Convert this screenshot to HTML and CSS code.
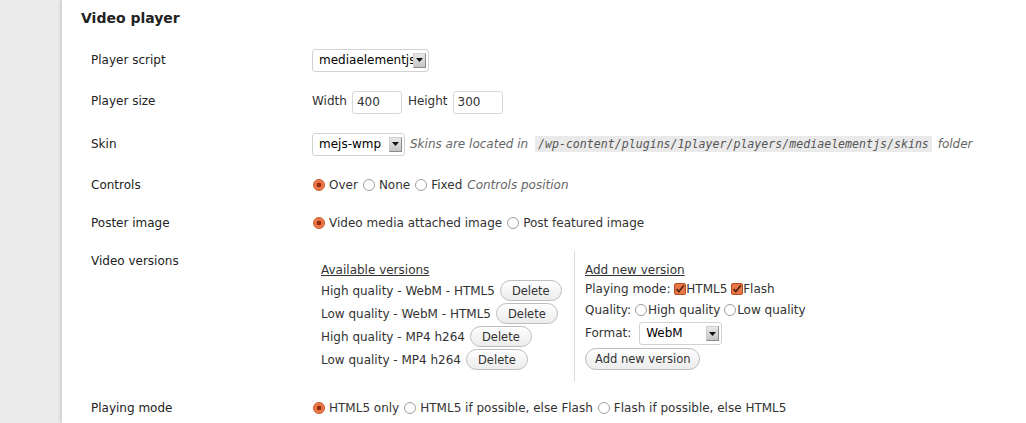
FILE: index.html
```html
<!DOCTYPE html>
<html>
<head>
<meta charset="utf-8">
<link rel="stylesheet" href="styles.css">
</head>
<body>
<div class="page">
  <div class="sidebar"></div>
  <div class="panel">
    <h2 class="title">Video player</h2>
    <div class="form">
      <div class="row r1">
        <div class="label">Player script</div>
        <div class="field">
          <span class="select w117"><span class="sel-text">mediaelementjs</span><span class="arrow"><svg width="7" height="4" viewBox="0 0 7 4"><path d="M0 0h7L3.5 4z" fill="#111"/></svg></span></span>
        </div>
      </div>
      <div class="row r2">
        <div class="label">Player size</div>
        <div class="field">
          <span class="txt">Width</span><span class="input">400</span><span class="txt">Height</span><span class="input">300</span>
        </div>
      </div>
      <div class="row r3">
        <div class="label">Skin</div>
        <div class="field">
          <span class="select w93"><span class="sel-text">mejs-wmp</span><span class="arrow"><svg width="7" height="4" viewBox="0 0 7 4"><path d="M0 0h7L3.5 4z" fill="#111"/></svg></span></span>
          <em class="desc">Skins are located in <code class="code">/wp-content/plugins/1player/players/mediaelementjs/skins</code> folder</em>
        </div>
      </div>
      <div class="row r4">
        <div class="label">Controls</div>
        <div class="field">
          <span class="radio on"></span><span class="opt">Over</span>
          <span class="radio"></span><span class="opt">None</span>
          <span class="radio"></span><span class="opt">Fixed</span>
          <em class="desc tight">Controls position</em>
        </div>
      </div>
      <div class="row r5">
        <div class="label">Poster image</div>
        <div class="field">
          <span class="radio on"></span><span class="opt">Video media attached image</span>
          <span class="radio"></span><span class="opt">Post featured image</span>
        </div>
      </div>
      <div class="row r6">
        <div class="label lbl-top">Video versions</div>
        <div class="field versions">
          <div class="vcol left">
            <div class="vhead">Available versions</div>
            <div class="vitem">High quality - WebM - HTML5<span class="btn">Delete</span></div>
            <div class="vitem">Low quality - WebM - HTML5<span class="btn">Delete</span></div>
            <div class="vitem">High quality - MP4 h264<span class="btn">Delete</span></div>
            <div class="vitem">Low quality - MP4 h264<span class="btn">Delete</span></div>
          </div>
          <div class="vcol right">
            <div class="vhead">Add new version</div>
            <div class="vline">Playing mode: <span class="check"><svg width="10" height="10" viewBox="0 0 10 10"><path d="M1.5 5l2.3 2.6L8.8 1.5" fill="none" stroke="#5a2412" stroke-width="1.8"/></svg></span>HTML5 <span class="check"><svg width="10" height="10" viewBox="0 0 10 10"><path d="M1.5 5l2.3 2.6L8.8 1.5" fill="none" stroke="#5a2412" stroke-width="1.8"/></svg></span>Flash</div>
            <div class="vline">Quality: <span class="radio sm"></span>High quality <span class="radio sm"></span>Low quality</div>
            <div class="vline fmt">Format: <span class="select w83"><span class="sel-text">WebM</span><span class="arrow"><svg width="7" height="4" viewBox="0 0 7 4"><path d="M0 0h7L3.5 4z" fill="#111"/></svg></span></span></div>
            <div class="vline btnline"><span class="btn wide">Add new version</span></div>
          </div>
        </div>
      </div>
      <div class="row r7">
        <div class="label">Playing mode</div>
        <div class="field">
          <span class="radio on"></span><span class="opt">HTML5 only</span>
          <span class="radio"></span><span class="opt">HTML5 if possible, else Flash</span>
          <span class="radio"></span><span class="opt">Flash if possible, else HTML5</span>
        </div>
      </div>
    </div>
  </div>
</div>
</body>
</html>
```

FILE: styles.css
```css
html, body {
  margin: 0;
  padding: 0;
  background: #fff;
}
body {
  font-family: "DejaVu Sans", sans-serif;
  font-size: 12px;
  color: #333;
}
.page {
  display: flex;
  height: 423px;
  overflow: hidden;
}
.sidebar {
  width: 62px;
  flex: none;
  background: #ececec;
}
.panel {
  flex: 1;
  background: #fff;
  box-shadow: -2px 0 3px rgba(0, 0, 0, 0.12);
  padding-left: 19px;
}
.title {
  margin: 0;
  height: 40px;
  line-height: 36px;
  font-size: 14px;
  font-weight: bold;
  color: #222;
}
.form {
  padding-left: 10px;
}
.row {
  display: flex;
  align-items: center;
}
.r1 { height: 40px; }
.r2 { height: 42px; }
.r3 { height: 44px; }
.r4 { height: 38px; }
.r5 { height: 38px; }
.r6 { align-items: flex-start; height: 148px; }
.r7 { height: 36px; }
.label {
  width: 221px;
  flex: none;
  color: #222;
}
.lbl-top {
  padding-top: 12px;
}
.field {
  display: flex;
  align-items: center;
  white-space: nowrap;
  color: #333;
}
.select {
  position: relative;
  display: inline-flex;
  align-items: center;
  border: 1px solid #d2d2d2;
  border-radius: 3px;
  background: #fff;
  box-sizing: border-box;
  height: 23px;
  color: #000;
  font-size: 12px;
  vertical-align: middle;
}
.sel-text {
  padding-left: 6px;
}
.w117 { width: 117px; }
.w93 { width: 93px; }
.w83 { width: 83px; }
.arrow {
  position: absolute;
  right: 2px;
  top: 3px;
  width: 13px;
  height: 15px;
  box-sizing: border-box;
  background: linear-gradient(#e8e8e8, #c4c4c4);
  border: 1px solid #8a8a8a;
  border-top-color: #d0d0d0;
  border-left-color: #d0d0d0;
  display: flex;
  align-items: center;
  justify-content: center;
}
.txt {
  margin-right: 5px;
}
.input {
  display: inline-block;
  box-sizing: border-box;
  width: 50px;
  height: 23px;
  line-height: 21px;
  border: 1px solid #d8d8d8;
  border-radius: 3px;
  padding-left: 4px;
  margin-right: 6px;
  color: #333;
  margin-top: 3px;
}
.desc {
  color: #666;
  margin-left: 5px;
}
.desc.tight {
  margin-left: 1px;
}
.code {
  font-family: "DejaVu Sans Mono", monospace;
  font-style: italic;
  font-size: 11.6px;
  background: #eaeaea;
  color: #555;
  padding: 1px 3px;
  margin: 0 2px 0 3px;
}
.radio {
  display: inline-block;
  width: 12px;
  height: 12px;
  border-radius: 50%;
  border: 1px solid #a0a0a0;
  background: #fff;
  box-sizing: border-box;
  margin: 0 4px 0 1px;
  flex: none;
  vertical-align: middle;
}
.radio.on {
  border-color: #c75022;
  background: radial-gradient(circle, #8f2c0c 0, #8f2c0c 2px, #e86f3f 2.6px, #f08a5c 6px);
}
.opt {
  margin-right: 4px;
}
.versions {
  display: flex;
  align-items: stretch;
  margin-top: 9px;
}
.vcol {
  padding: 10px 9px;
}
.vcol.left {
  width: 263px;
  box-sizing: border-box;
  border-right: 1px solid #dcdcdc;
}
.vcol.right {
  padding-left: 10px;
}
.vhead {
  text-decoration: underline;
  line-height: 18px;
  color: #333;
}
.vitem {
  height: 23px;
  display: flex;
  align-items: center;
}
.btn {
  display: inline-flex;
  align-items: center;
  justify-content: center;
  box-sizing: border-box;
  height: 21px;
  padding: 0 11px;
  border: 1px solid #bdbdbd;
  border-radius: 11px;
  background: linear-gradient(#fefefe, #ececec);
  color: #333;
  margin-left: 5px;
  font-size: 11.5px;
}
.btn.wide {
  margin-left: 0;
  padding: 0 9px;
  height: 22px;
}
.vline {
  height: 21px;
  line-height: 21px;
}
.vline.fmt {
  height: 25px;
  line-height: 25px;
}
.vline.fmt .select {
  margin-left: 4px;
}
.vline.btnline {
  height: 26px;
  padding-top: 2px;
  box-sizing: border-box;
}
.check {
  display: inline-flex;
  width: 12px;
  height: 12px;
  box-sizing: border-box;
  border: 1px solid #b84a20;
  border-radius: 2px;
  background: #e7784a;
  align-items: center;
  justify-content: center;
  vertical-align: middle;
  margin-top: -2px;
}
.radio.sm {
  margin: -2px 1px 0 0;
}
```
